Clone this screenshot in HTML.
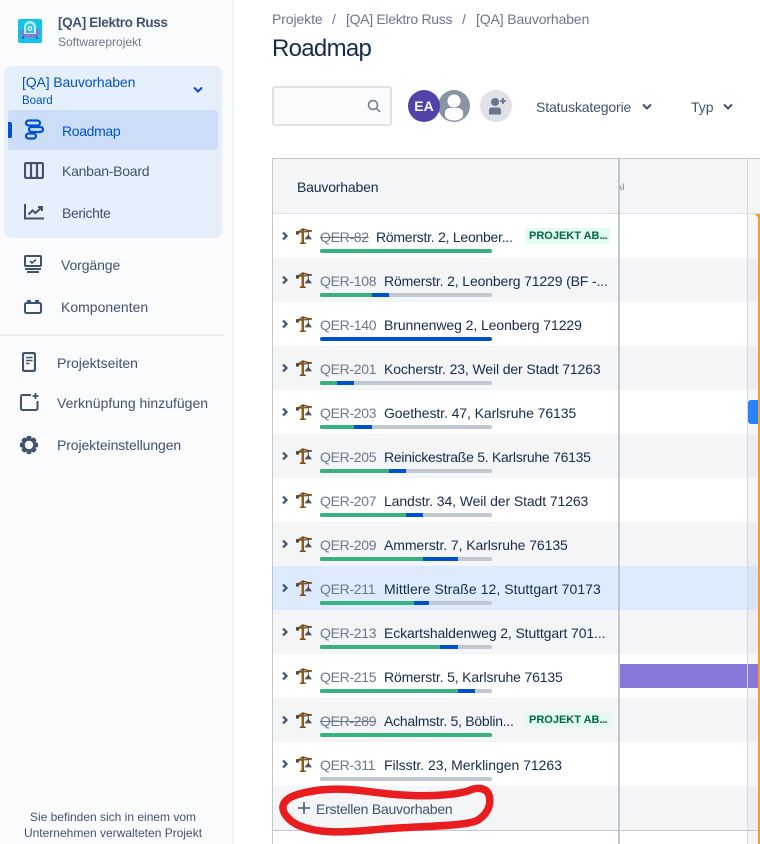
<!DOCTYPE html>
<html lang="de"><head><meta charset="utf-8"><title>Roadmap</title>
<style>
html,body{margin:0;padding:0}
body{width:760px;height:844px;overflow:hidden;background:#fff;position:relative;font-family:"Liberation Sans",sans-serif;font-size:14px;color:#172B4D}
.a{position:absolute;white-space:nowrap}
.t{position:absolute;white-space:nowrap;line-height:20px;height:20px}
.side{position:absolute;left:0;top:0;width:232px;height:844px;background:#FAFBFC;border-right:2px solid #F1F2F5}
.nav{color:#42526E}
.row{position:absolute;left:273px;width:487px;height:44px}
.w{background:#fff}.g{background:#F4F5F7}.h{background:#DEEBFF}
.shade{position:absolute;left:475px;top:0;width:12px;height:44px;background:rgba(9,30,66,.035)}
.chev{position:absolute;left:8px;top:17px}
.cr{position:absolute;left:23px;top:14px;width:16px;height:16px}
.k{position:absolute;left:47px;top:13px;line-height:20px;color:#6B778C;white-space:nowrap;letter-spacing:-.3px}
.k.x{text-decoration:line-through}
.s{position:absolute;left:111px;top:13px;line-height:20px;color:#172B4D;white-space:nowrap;letter-spacing:-.08px}
.bar{position:absolute;left:47px;top:35px;width:172px;height:4px;border-radius:2px;background:#C1C7D0;overflow:hidden}
.bar i{position:absolute;top:0;height:4px;left:0}
.gr{background:#36B37E}.bl{background:#0052CC}
.tag{position:absolute;left:252px;top:14px;width:85px;height:16px;background:#E3FCEF;border-radius:3px;color:#006644;font-size:11px;font-weight:bold;line-height:16px;text-indent:4px;overflow:hidden;white-space:nowrap}
.tag span{letter-spacing:-.5px}
</style></head>
<body>
<svg width="0" height="0" style="position:absolute"><defs>
<symbol id="crane" viewBox="0 0 16 16">
<path d="M0 4.400 L16 2.800" stroke="#8B5A1E" stroke-width="1.800" fill="none"/>
<path d="M6.800 0.600V15.200" stroke="#8B5A1E" stroke-width="2.500" fill="none"/>
<path d="M3.800 15.300H9.800" stroke="#7A4A12" stroke-width="1.500" fill="none"/>
<path d="M1 4.500L6.800 0.800L14 3" stroke="#4F4030" stroke-width="1" fill="none"/>
<path d="M0 3.200h3v3.400H0z" fill="#5f421c"/>
<path d="M12.400 4V7" stroke="#5E6C84" stroke-width="1.200"/>
<path d="M8.400 11.400L12.400 6.400L16 11.400Z" fill="#55555F"/>
</symbol>
<symbol id="ch" viewBox="0 0 8 10"><path d="M2 1.500L5.500 5L2 8.500" stroke="#42526E" stroke-width="2.200" fill="none"/></symbol>
</defs></svg>

<div class="side"></div>
<div class="a" style="left:4px;top:66px;width:218px;height:172px;background:#E6EFFC;border-radius:8px"></div>
<div class="a" style="left:8px;top:110px;width:210px;height:40px;background:#CCDDF8;border-radius:3px"></div>
<div class="a" style="left:8px;top:122px;width:4px;height:16px;background:#0052CC;border-radius:0 2px 2px 0"></div>

<svg class="a" style="left:18px;top:19px" width="24" height="24" viewBox="0 0 24 24">
<rect width="24" height="24" rx="2" fill="#10C4E4"/>
<ellipse cx="12" cy="13.500" rx="9.500" ry="5.500" fill="#8777D9"/>
<path d="M6 15V8a6 6 0 0 1 12 0v7z" fill="#B3F0FA"/>
<path d="M8 14V8.500a4 4 0 0 1 8 0V14z" fill="#2FC6E0"/>
<circle cx="12" cy="9.500" r="2.200" fill="#fff"/><circle cx="12" cy="9.500" r=".9" fill="#5243AA"/>
<path d="M6 17l-1.500 3M18 17l1.500 3" stroke="#5243AA" stroke-width="1.500"/>
</svg>
<div class="t" style="left:58px;top:13px;font-weight:bold;color:#42526E;font-size:13.500px;letter-spacing:-.35px">[QA] Elektro Russ</div>
<div class="t" style="left:58px;top:32px;font-size:12px;color:#6B778C">Softwareprojekt</div>
<div class="t" style="left:22px;top:72px;color:#0052CC;letter-spacing:-.12px">[QA] Bauvorhaben</div>
<div class="t" style="left:22px;top:91px;font-size:11.500px;color:#0052CC">Board</div>
<svg class="a" style="left:192px;top:85px" width="12" height="10" viewBox="0 0 12 10"><path d="M2 2.500L6 6.500L10 2.500" stroke="#0052CC" stroke-width="2" fill="none"/></svg>

<svg class="a" style="left:24px;top:119px" width="20" height="21" viewBox="0 0 20 21" fill="none" stroke="#0052CC" stroke-width="2.200"><rect x="2" y="1.500" width="14" height="5" rx="2.500"/><rect x="5" y="8" width="14" height="5" rx="2.500"/><rect x="2" y="14.500" width="10" height="5" rx="2.500"/></svg>
<div class="t" style="left:62px;top:121px;color:#0052CC;letter-spacing:-.35px">Roadmap</div>

<svg class="a" style="left:24px;top:162px" width="20" height="17" viewBox="0 0 20 17" fill="none" stroke="#42526E" stroke-width="2.200"><rect x="1" y="1" width="18" height="15" rx="1.500"/><path d="M7 1v15M13 1v15"/></svg>
<div class="t nav" style="left:62px;top:161px;letter-spacing:-.25px">Kanban-Board</div>

<svg class="a" style="left:24px;top:204px" width="20" height="16" viewBox="0 0 20 16" fill="none" stroke="#42526E" stroke-width="2"><path d="M1 0v14.500h19"/><path d="M4.500 10.500l4-4 3 2.500 6-5.500"/><path d="M14 3h4v4"/></svg>
<div class="t nav" style="left:62px;top:203px;letter-spacing:-.35px">Berichte</div>

<svg class="a" style="left:24px;top:255px" width="18" height="18" viewBox="0 0 18 18" fill="none" stroke="#42526E" stroke-width="2"><rect x="1" y="1" width="16" height="10" rx="1"/><path d="M1 14h16M3 17h12" /><path d="M6 6l2 2 4-3.500" stroke-width="1.600"/></svg>
<div class="t nav" style="left:61px;top:255px;letter-spacing:-.1px">Vorgänge</div>

<svg class="a" style="left:24px;top:299px" width="18" height="15" viewBox="0 0 18 15" fill="none" stroke="#42526E" stroke-width="2"><rect x="1" y="4" width="16" height="10" rx="1.500"/><path d="M4 1v3M6 1v3M12 1v3M14 1v3"/></svg>
<div class="t nav" style="left:61px;top:297px">Komponenten</div>

<div class="a" style="left:0;top:334px;width:224px;height:2px;background:#EBECF0"></div>

<svg class="a" style="left:22px;top:352px" width="14" height="20" viewBox="0 0 14 20" fill="none" stroke="#42526E" stroke-width="2.200"><rect x="1" y="1" width="12" height="18" rx="1.500"/><path d="M4 5.500h6.500M4 8.500h6.500M4 11.500h3.500" stroke-width="1.600"/></svg>
<div class="t nav" style="left:57px;top:353px">Projektseiten</div>

<svg class="a" style="left:20px;top:393px" width="19" height="18" viewBox="0 0 19 18" fill="none" stroke="#42526E" stroke-width="2"><path d="M11 2H2.500A1.500 1.500 0 0 0 1 3.500V15.500A1.500 1.500 0 0 0 2.500 17H16A1.500 1.500 0 0 0 17.500 15.500V8"/><path d="M15.500 0v6M12.500 3h6" stroke-width="1.800"/></svg>
<div class="t nav" style="left:57px;top:393px">Verknüpfung hinzufügen</div>

<svg class="a" style="left:20px;top:436px" width="18" height="18" viewBox="0 0 18 18"><path d="M7 0h4l.6 2.500 2.300-1.200 2.800 2.800-1.300 2.200 2.600.7v4l-2.600.6 1.300 2.300-2.800 2.800-2.300-1.300L11 18H7l-.6-2.600-2.300 1.300-2.800-2.800 1.300-2.300L0 11V7l2.600-.7-1.300-2.200 2.800-2.800 2.300 1.200z" fill="#42526E"/><circle cx="9" cy="9" r="4.200" fill="#FAFBFC"/></svg>
<div class="t nav" style="left:57px;top:435px;letter-spacing:-.1px">Projekteinstellungen</div>

<div class="a" style="left:0;top:809px;width:226px;text-align:center;font-size:12px;line-height:16px;color:#42526E">Sie befinden sich in einem vom<br>Unternehmen verwalteten Projekt</div>

<div class="t" style="left:272px;top:9px;color:#6B778C;letter-spacing:-.1px">Projekte</div>
<div class="t" style="left:332px;top:9px;color:#6B778C">/</div>
<div class="t" style="left:346px;top:9px;color:#6B778C;letter-spacing:-.3px">[QA] Elektro Russ</div>
<div class="t" style="left:462px;top:9px;color:#6B778C">/</div>
<div class="t" style="left:476px;top:9px;color:#6B778C;letter-spacing:-.12px">[QA] Bauvorhaben</div>
<div class="a" style="left:272px;top:35px;font-size:24px;line-height:28px;color:#172B4D;letter-spacing:-.7px">Roadmap</div>

<div class="a" style="left:272px;top:86px;width:116px;height:36px;border:2px solid #DFE1E6;border-radius:3px;background:#FAFBFC"></div>
<svg class="a" style="left:367px;top:99px" width="14" height="14" viewBox="0 0 14 14" fill="none" stroke="#6B778C" stroke-width="1.500"><circle cx="6" cy="6" r="4.500"/><path d="M9.500 9.500L13 13"/></svg>

<svg class="a" style="left:438px;top:90px" width="32" height="32" viewBox="0 0 32 32"><circle cx="16" cy="16" r="16" fill="#8993A4"/><circle cx="16" cy="11" r="6.500" fill="#fff"/><path d="M7 24a5 5 0 0 1 5-6h8a5 5 0 0 1 5 6v1.500a9 5 0 0 1-18 0z" fill="#fff"/></svg>
<div class="a" style="left:408px;top:90px;width:32px;height:32px;border-radius:50%;background:#5243AA;color:#fff;font-weight:bold;font-size:14px;line-height:32px;text-align:center">EA</div>
<svg class="a" style="left:480px;top:90px" width="32" height="32" viewBox="0 0 32 32"><circle cx="16" cy="16" r="16" fill="#DFE1E6"/><circle cx="15" cy="12" r="4" fill="#6B778C"/><path d="M9 20a3 3 0 0 1 3-2.500h6a3 3 0 0 1 3 2.500v4.500H9z" fill="#6B778C"/><path d="M23 8v6M20 11h6" stroke="#6B778C" stroke-width="1.800"/></svg>

<div class="t" style="left:536px;top:97px;color:#42526E;letter-spacing:-.14px">Statuskategorie</div>
<svg class="a" style="left:641px;top:102px" width="12" height="10" viewBox="0 0 12 10"><path d="M2 2.500L6 6.500L10 2.500" stroke="#42526E" stroke-width="2" fill="none"/></svg>
<div class="t" style="left:691px;top:97px;color:#42526E">Typ</div>
<svg class="a" style="left:722px;top:102px" width="12" height="10" viewBox="0 0 12 10"><path d="M2 2.500L6 6.500L10 2.500" stroke="#42526E" stroke-width="2" fill="none"/></svg>

<!-- table header -->
<div class="a" style="left:272px;top:158px;width:488px;height:54px;background:#F4F5F7;border-top:1px solid #C1C7D0;border-bottom:1px solid #DFE1E6"></div>
<div class="t" style="left:297px;top:177px;color:#172B4D;letter-spacing:-.18px">Bauvorhaben</div>
<div class="a" style="left:620px;top:180px;width:5px;height:14px;overflow:hidden;font-size:9px;line-height:14px;color:#6B778C"><span style="margin-left:-4px">AI</span></div>

<div class="row w" style="top:214px"><div class="shade"></div><svg class="chev" width="8" height="10"><use href="#ch"/></svg><svg class="cr"><use href="#crane"/></svg><div class="k x">QER-82</div><div class="s" style="left:103px;letter-spacing:-.25px">Römerstr. 2, Leonber...</div><div class="tag">PROJEKT AB<span>...</span></div><div class="bar"><i class="gr" style="width:172px"></i></div></div>

<div class="row g" style="top:258px"><div class="shade"></div><svg class="chev" width="8" height="10"><use href="#ch"/></svg><svg class="cr"><use href="#crane"/></svg><div class="k">QER-108</div><div class="s" style="letter-spacing:-.14px">Römerstr. 2, Leonberg 71229 (BF -...</div><div class="bar"><i class="bl" style="width:69px"></i><i class="gr" style="width:52px"></i></div></div>

<div class="row w" style="top:302px"><div class="shade"></div><svg class="chev" width="8" height="10"><use href="#ch"/></svg><svg class="cr"><use href="#crane"/></svg><div class="k">QER-140</div><div class="s">Brunnenweg 2, Leonberg 71229</div><div class="bar"><i class="bl" style="width:172px"></i></div></div>

<div class="row g" style="top:346px"><div class="shade"></div><svg class="chev" width="8" height="10"><use href="#ch"/></svg><svg class="cr"><use href="#crane"/></svg><div class="k">QER-201</div><div class="s" style="letter-spacing:-.12px">Kocherstr. 23, Weil der Stadt 71263</div><div class="bar"><i class="bl" style="width:34px"></i><i class="gr" style="width:17px"></i></div></div>

<div class="row w" style="top:390px"><div class="shade"></div><svg class="chev" width="8" height="10"><use href="#ch"/></svg><svg class="cr"><use href="#crane"/></svg><div class="k">QER-203</div><div class="s">Goethestr. 47, Karlsruhe 76135</div><div class="bar"><i class="bl" style="width:52px"></i><i class="gr" style="width:34px"></i></div></div>

<div class="row g" style="top:434px"><div class="shade"></div><svg class="chev" width="8" height="10"><use href="#ch"/></svg><svg class="cr"><use href="#crane"/></svg><div class="k">QER-205</div><div class="s" style="letter-spacing:-.27px">Reinickestraße 5. Karlsruhe 76135</div><div class="bar"><i class="bl" style="width:86px"></i><i class="gr" style="width:69px"></i></div></div>

<div class="row w" style="top:478px"><div class="shade"></div><svg class="chev" width="8" height="10"><use href="#ch"/></svg><svg class="cr"><use href="#crane"/></svg><div class="k">QER-207</div><div class="s" style="letter-spacing:-.1px">Landstr. 34, Weil der Stadt 71263</div><div class="bar"><i class="bl" style="width:103px"></i><i class="gr" style="width:86px"></i></div></div>

<div class="row g" style="top:522px"><div class="shade"></div><svg class="chev" width="8" height="10"><use href="#ch"/></svg><svg class="cr"><use href="#crane"/></svg><div class="k">QER-209</div><div class="s">Ammerstr. 7, Karlsruhe 76135</div><div class="bar"><i class="bl" style="width:138px"></i><i class="gr" style="width:103px"></i></div></div>

<div class="row h" style="top:566px"><div class="shade"></div><svg class="chev" width="8" height="10"><use href="#ch"/></svg><svg class="cr"><use href="#crane"/></svg><div class="k">QER-211</div><div class="s" style="letter-spacing:.06px">Mittlere Straße 12, Stuttgart 70173</div><div class="bar"><i class="bl" style="width:109px"></i><i class="gr" style="width:94px"></i></div></div>

<div class="row g" style="top:610px"><div class="shade"></div><svg class="chev" width="8" height="10"><use href="#ch"/></svg><svg class="cr"><use href="#crane"/></svg><div class="k">QER-213</div><div class="s" style="letter-spacing:-.12px">Eckartshaldenweg 2, Stuttgart 701...</div><div class="bar"><i class="bl" style="width:138px"></i><i class="gr" style="width:120px"></i></div></div>

<div class="row w" style="top:654px"><div class="shade"></div><svg class="chev" width="8" height="10"><use href="#ch"/></svg><svg class="cr"><use href="#crane"/></svg><div class="k">QER-215</div><div class="s" style="letter-spacing:-.15px">Römerstr. 5, Karlsruhe 76135</div><div class="bar"><i class="bl" style="width:155px"></i><i class="gr" style="width:138px"></i></div></div>

<div class="row g" style="top:698px"><div class="shade"></div><svg class="chev" width="8" height="10"><use href="#ch"/></svg><svg class="cr"><use href="#crane"/></svg><div class="k x">QER-289</div><div class="s" style="letter-spacing:-.25px">Achalmstr. 5, Böblin...</div><div class="tag">PROJEKT AB<span>...</span></div><div class="bar"><i class="gr" style="width:172px"></i></div></div>

<div class="row w" style="top:742px"><div class="shade"></div><svg class="chev" width="8" height="10"><use href="#ch"/></svg><svg class="cr"><use href="#crane"/></svg><div class="k">QER-311</div><div class="s" style="letter-spacing:-.04px">Filsstr. 23, Merklingen 71263</div><div class="bar"></div></div>

<div class="row g" style="top:786px"><div class="shade"></div></div>
<div class="a" style="left:272px;top:830px;width:488px;height:1px;background:#C1C7D0"></div>
<div class="a" style="left:748px;top:831px;width:10px;height:13px;background:#F4F5F7"></div>

<svg class="a" style="left:298px;top:802px" width="12" height="12" viewBox="0 0 12 12"><path d="M6 0v12M0 6h12" stroke="#42526E" stroke-width="1.500"/></svg>
<div class="t" style="left:316px;top:799px;color:#42526E;letter-spacing:-.25px">Erstellen Bauvorhaben</div>

<!-- timeline overlays -->
<div class="a" style="left:620px;top:664px;width:138px;height:24px;background:#8777D9"></div>
<div class="a" style="left:748px;top:400px;width:10px;height:24px;background:#2684FF;border-radius:3px 0 0 3px"></div>

<!-- vertical lines -->
<div class="a" style="left:272px;top:158px;width:1px;height:686px;background:#C1C7D0"></div>
<div class="a" style="left:618px;top:158px;width:2px;height:686px;background:#C1C7D0"></div>
<div class="a" style="left:747px;top:159px;width:1px;height:685px;background:#D5D8DE"></div>
<div class="a" style="left:758px;top:214px;width:2px;height:630px;background:#FF991F"></div>
<svg class="a" style="left:755px;top:214px" width="5" height="6"><path d="M0 0H5V6z" fill="#FF991F"/></svg>

<!-- red annotation -->
<svg class="a" style="left:0;top:0;pointer-events:none" width="760" height="844" viewBox="0 0 760 844"><path d="M468 791C476 787 486 787 489 795C492 806 486 816 476 821C460 827 410 826 372 830C340 833 318 833 300 826C288 821 282 812 283 806C285 797 298 793 320 790C345 787 368 792 390 794C420 797 450 796 468 791Z" fill="none" stroke="#E91C1F" stroke-width="7.500" stroke-linejoin="round"/></svg>
</body></html>
